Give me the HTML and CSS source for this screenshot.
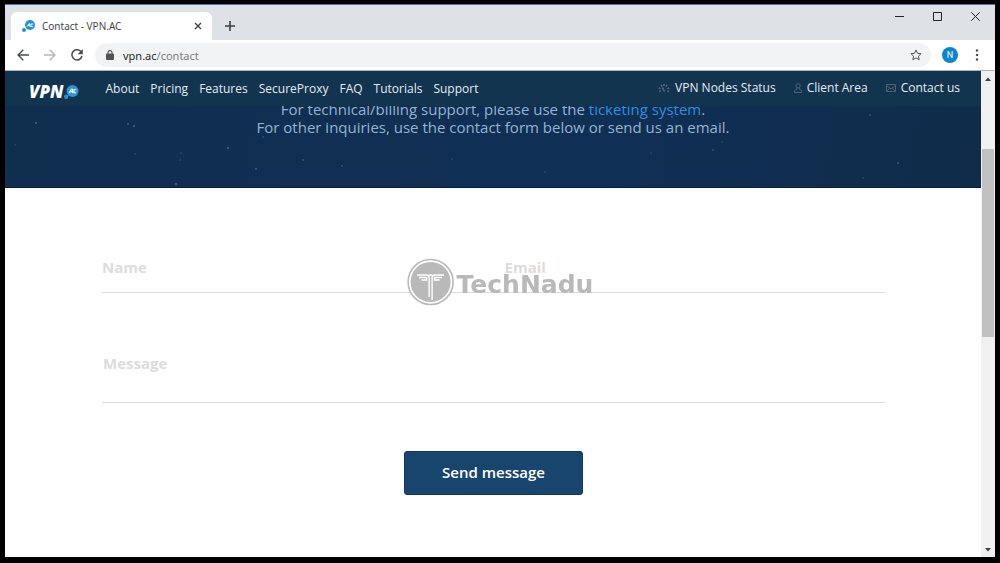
FILE: index.html
```html
<!DOCTYPE html>
<html lang="en">

<head>
    <meta charset="UTF-8">
    <meta name="viewport" content="width=device-width, initial-scale=1.0">
    <title>Contact - VPN.AC</title>
    <link rel="stylesheet" href="styles.css">
</head>

<body>

    <div class="window">
        <!-- Tab strip -->
        <div class="titlebar">
            <div class="tab">
                <svg class="favicon" width="14" height="14" viewBox="0 0 14 14">
                    <circle cx="8" cy="6" r="5" fill="#2492d6" />
                    <circle cx="2" cy="11" r="2" fill="#2492d6" />
                    <path d="M5 7.700l2-3h.8v3M6 6.500h1.800M11.300 5H9.100L8.800 7.500h2.200" fill="none" stroke="#fff" stroke-width="0.9" />
                </svg>
                <span class="tab-title">Contact - VPN.AC</span>
                <button type="button" class="tab-close" aria-label="Close tab">
                    <svg width="8" height="8" viewBox="0 0 8 8"><path d="M1 1l6 6M7 1L1 7" stroke="#3c4043" stroke-width="1.3" /></svg>
                </button>
            </div>
            <button type="button" class="new-tab" aria-label="New tab">
                <svg width="10" height="10" viewBox="0 0 10 10"><path d="M5 0v10M0 5h10" stroke="#3c4043" stroke-width="1.6" /></svg>
            </button>
            <div class="window-controls">
                <button type="button" aria-label="Minimize"><svg width="9" height="9" viewBox="0 0 9 9"><path d="M0 4.5h9" stroke="#222" /></svg></button>
                <button type="button" aria-label="Maximize"><svg width="9" height="9" viewBox="0 0 9 9"><path d="M.5.5h8v8h-8z" fill="none" stroke="#222" /></svg></button>
                <button type="button" aria-label="Close"><svg width="9" height="9" viewBox="0 0 9 9"><path d="M.3.3l8.4 8.4M8.7.3L.3 8.7" stroke="#222" /></svg></button>
            </div>
        </div>

        <!-- Toolbar -->
        <div class="toolbar">
            <button type="button" aria-label="Back">
                <svg width="12" height="12" viewBox="0 0 12 12"><path d="M12 6H1.2M6.3.8L1.1 6l5.2 5.2" fill="none" stroke="#4a4d51" stroke-width="1.4" /></svg>
            </button>
            <button type="button" aria-label="Forward">
                <svg width="12" height="12" viewBox="0 0 12 12"><path d="M0 6h10.8M5.7.8L10.9 6l-5.2 5.2" fill="none" stroke="#b5b7ba" stroke-width="1.4" /></svg>
            </button>
            <button type="button" aria-label="Reload">
                <svg width="12" height="12" viewBox="0 0 12 12"><path d="M10.3 3A5.1 5.1 0 1 0 11 7" fill="none" stroke="#4a4d51" stroke-width="1.5" /><path d="M11.8 0v5.2H6.6z" fill="#4a4d51" /></svg>
            </button>
            <div class="omnibox">
                <svg width="8" height="10" viewBox="0 0 8 10"><path d="M2 4V2.6a2 2 0 0 1 4 0V4" fill="none" stroke="#505357" stroke-width="1.1" /><rect y="3.6" width="8" height="6.4" rx="1" fill="#505357" /></svg>
                <span class="url">vpn.ac<span class="url-path">/contact</span></span>
                <button type="button" class="bookmark" aria-label="Bookmark this page">
                    <svg width="12" height="12" viewBox="0 0 12 12"><path d="M6 1l1.5 3.3 3.6.4-2.7 2.4.8 3.6L6 8.9l-3.2 1.8.8-3.6L.9 4.7l3.6-.4z" fill="none" stroke="#505357" /></svg>
                </button>
            </div>
            <button type="button" class="avatar">N</button>
            <button type="button" class="menu" aria-label="Menu">
                <svg width="4" height="12" viewBox="0 0 4 12" fill="#4a4d51"><circle cx="2" cy="1.5" r="1.2" /><circle cx="2" cy="6" r="1.2" /><circle cx="2" cy="10.5" r="1.2" /></svg>
            </button>
        </div>

        <div class="viewport">
            <div class="page">
                <header class="navbar">
                    <a href="#" class="logo" aria-label="VPN.AC">
                        <span class="logo-text">VPN</span>
                        <svg width="15" height="16" viewBox="0 0 15 16">
                            <circle cx="8.500" cy="7" r="6" fill="#2c95d8" />
                            <circle cx="2.2" cy="12.7" r="2.2" fill="#2492d6" />
                            <path d="M5.1 9l2.4-3.800h1V9M6.300 7.600h2.200M12.200 5.500h-2L9.900 8.600h2.100" fill="none" stroke="#fff" stroke-width="1.1" />
                        </svg>
                    </a>
                    <nav class="main-nav">
                        <a href="#">About</a>
                        <a href="#">Pricing</a>
                        <a href="#">Features</a>
                        <a href="#">SecureProxy</a>
                        <a href="#">FAQ</a>
                        <a href="#">Tutorials</a>
                        <a href="#">Support</a>
                    </nav>
                    <nav class="side-nav">
                        <a href="#">
                            <svg width="12" height="10" viewBox="0 0 12 10" fill="none" stroke="#536b7f">
                                <path d="M1 8.500l1.800-.6M.8 5l1.900.6M3 2l1.200 1.600M6 1v2M9 2L7.800 3.600M11.200 5l-1.900.6M11 8.500l-1.800-.6" stroke-width="1.500" />
                                <path d="M4.500 4.500l2 4" stroke-width="1.500" />
                            </svg>
                            VPN Nodes Status
                        </a>
                        <a href="#">
                            <svg width="8" height="10" viewBox="0 0 8 10" fill="none" stroke="#496175"><circle cx="4" cy="2.8" r="2.2" /><path d="M2.8 5v1.2L.5 7.5v2h7v-2L5.2 6.2V5" /></svg>
                            Client Area
                        </a>
                        <a href="#">
                            <svg width="10" height="8" viewBox="0 0 10 8" fill="none" stroke="#496175"><path d="M.5.5h9v7h-9zM.5 1.5L5 5l4.5-3.5M.8 7.2l2.7-3M9.2 7.2l-2.7-3" /></svg>
                            Contact us
                        </a>
                    </nav>
                </header>

                <section class="hero">
                    <svg class="stars" width="976" height="117" fill="#6fa0d6">
                        <circle cx="31" cy="52" r="1" opacity=".5" /><circle cx="123" cy="53" r="1" opacity=".4" /><circle cx="129" cy="55" r="1" opacity=".5" />
                        <circle cx="171" cy="113" r="1" opacity=".6" /><circle cx="223" cy="77" r="1" opacity=".5" /><circle cx="251" cy="98" r="1" opacity=".4" />
                        <circle cx="298" cy="89" r="1" opacity=".3" /><circle cx="130" cy="83" r="1" opacity=".2" /><circle cx="176" cy="82" r="1" opacity=".2" />
                        <circle cx="258" cy="66" r="1" opacity=".3" /><circle cx="10" cy="74" r="1" opacity=".2" /><circle cx="175" cy="89" r="1" opacity=".2" />
                        <circle cx="337" cy="95" r="1" opacity=".3" /><circle cx="447" cy="88" r="1" opacity=".2" /><circle cx="540" cy="101" r="1" opacity=".2" />
                        <circle cx="667" cy="46" r="1" opacity=".4" /><circle cx="646" cy="82" r="1" opacity=".2" /><circle cx="708" cy="79" r="1" opacity=".3" />
                        <circle cx="717" cy="71" r="1" opacity=".2" /><circle cx="865" cy="44" r="1" opacity=".3" /><circle cx="893" cy="92" r="1" opacity=".4" /><circle cx="858" cy="107" r="1" opacity=".2" />
                    </svg>
                    <p>For technical/billing support, please use the <a href="#">ticketing system</a>.<br>
                        For other inquiries, use the contact form below or send us an email.</p>
                </section>

                <form class="contact-form">
                    <input type="text" placeholder="Name" aria-label="Name">
                    <input type="email" class="email" placeholder="Email" aria-label="Email">
                    <textarea placeholder="Message" aria-label="Message"></textarea>
                    <button type="submit">Send message</button>
                </form>
            </div>

            <div class="scrollbar">
                <svg width="6" height="4" viewBox="0 0 6 4"><path d="M0 4l3-3.5L6 4z" fill="#404040" /></svg>
                <div class="track"><div class="thumb"></div></div>
                <svg width="6" height="4" viewBox="0 0 6 4"><path d="M0 0l3 3.5L6 0z" fill="#404040" /></svg>
            </div>
        </div>
    </div>

    <div class="watermark">
        <svg width="48" height="48" viewBox="0 0 48 48">
            <circle cx="24" cy="24" r="22.5" fill="#fff" stroke="#b9b9b9" stroke-width="1.6" />
            <circle cx="24" cy="24" r="20" fill="#b9b9b9" />
            <g fill="none" stroke="#fff" stroke-width="1.4">
                <path d="M10.500 17H20q2.500 0 2.500 2.500V39" />
                <path d="M37.500 17H28q-2.500 0-2.500 2.500V42" />
                <path d="M12.500 19.500H20V22h-5M35.500 19.500H28V22h5" />
                <path d="M22.500 17h3" />
            </g>
        </svg>
        <span>TechNadu</span>
    </div>

</body>

</html>
```
FILE: styles.css
```css
* {
    box-sizing: border-box;
}

body {
    margin: 0;
    background-color: #000;
    font-family: "Open Sans", sans-serif;
}

button {
    padding: 0;
    border: none;
    background: none;
    cursor: pointer;
}

a {
    text-decoration: none;
}

svg {
    display: block;
    flex: none;
}

.window {
    display: flex;
    flex-direction: column;
    min-height: 100vh;
    border: solid #000;
    border-width: 4px 5px 6px;
    background-color: #fff;
}

/* Browser chrome */
.titlebar {
    display: flex;
    height: 36px;
    padding-left: 6px;
    border-top: 1px solid #4a78b0;
    background-color: #dee1e6;
}

.tab {
    display: flex;
    align-items: center;
    width: 201px;
    height: 28px;
    margin-top: 7px;
    padding: 0 10px 0 11px;
    border-radius: 6px 6px 0 0;
    background-color: #fff;
}

.tab-title {
    flex: 1;
    margin-left: 6px;
    font-family: "Noto Sans", sans-serif;
    font-size: 10px;
    color: #45494d;
}

.new-tab {
    margin: 7px 0 0 13px;
}

.window-controls {
    display: flex;
    align-items: flex-start;
    gap: 29px;
    margin-left: auto;
    padding: 7px 15px;
}

.toolbar {
    display: flex;
    align-items: center;
    gap: 15px;
    height: 31px;
    padding: 0 16px 0 12px;
    border-bottom: 1px solid #a9b5bd;
}

.omnibox {
    display: flex;
    flex: 1;
    align-items: center;
    height: 24px;
    margin-left: -3px;
    padding: 0 9px 0 11px;
    border-radius: 12px;
    background-color: #f1f3f4;
    font-family: "Noto Sans", sans-serif;
    font-size: 11px;
    color: #27292c;
}

.url {
    flex: 1;
    margin-left: 9px;
}

.url-path {
    color: #7b7f84;
}

.avatar {
    width: 16px;
    height: 16px;
    margin: 0 2px 0 -4px;
    border-radius: 50%;
    background-color: #0b84cf;
    font: 9px Roboto, sans-serif;
    color: #fff;
}

.viewport {
    display: flex;
    flex: 1;
}

.page {
    position: relative;
    flex: 1;
}

/* Site header */
.navbar {
    position: absolute;
    z-index: 1;
    top: 0;
    left: 0;
    right: 0;
    display: flex;
    align-items: center;
    height: 35px;
    padding: 0 21px 0 24px;
    background-color: #12344f;
}

.logo {
    display: flex;
    align-items: center;
    padding-top: 6px;
}

.logo-text {
    font-size: 17px;
    font-weight: 800;
    font-style: italic;
    line-height: 16px;
    color: #fff;
}

.main-nav,
.side-nav {
    display: flex;
    gap: 11px;
    font-size: 12px;
}

.main-nav {
    margin-left: 27px;
}

.side-nav {
    gap: 18px;
    margin-left: auto;
    padding-bottom: 2px;
}

.side-nav a {
    display: flex;
    align-items: center;
    gap: 5px;
}

.navbar nav a {
    color: #e3edf5;
}

.hero {
    position: relative;
    height: 117px;
    padding-top: 29px;
    border-bottom: 1px solid #0a1c44;
    background: linear-gradient(100deg, #102e4e, #102f55 60%, #102c4a);
    text-align: center;
    overflow: hidden;
}

.stars {
    position: absolute;
    top: 0;
    left: 0;
}

.hero p {
    position: relative;
    margin: 0;
    font-size: 15px;
    line-height: 18px;
    color: #93b3d1;
}

.hero a {
    color: #2d8fdc;
}

/* Contact form */
.contact-form {
    display: grid;
    grid-template-columns: 1fr 1fr;
    padding: 56px 96px 60px 97px;
}

.contact-form input,
.contact-form textarea {
    width: 100%;
    height: 49px;
    padding: 0 0 2px;
    border: none;
    border-bottom: 1px solid #dcdcdc;
    border-radius: 0;
    background: none;
    font: bold 15px "Open Sans", sans-serif;
    color: #555;
    outline: none;
    resize: none;
}

.contact-form .email {
    padding-left: 11px;
}

.contact-form textarea {
    grid-column: span 2;
    height: 50px;
    margin-top: 60px;
    padding-left: 1px;
    overflow: hidden;
}

.contact-form ::placeholder {
    color: #dcdcdc;
    opacity: 1;
}

.contact-form button {
    grid-column: span 2;
    justify-self: center;
    height: 44px;
    margin-top: 48px;
    padding: 0 37px 2px;
    border: 1px solid #0f3963;
    border-radius: 3px;
    background-color: #17456e;
    font: 600 15px "Open Sans", sans-serif;
    color: #fff;
}

.scrollbar {
    display: flex;
    flex-direction: column;
    align-items: center;
    width: 14px;
    padding: 6px 0 5px;
    background-color: #f0f0f0;
}

.track {
    flex: 1;
    width: 12px;
    padding-top: 68px;
}

.thumb {
    height: 188px;
    background-color: #c1c1c1;
}

.watermark {
    position: fixed;
    top: 50%;
    left: 50%;
    display: flex;
    align-items: center;
    gap: 2px;
    transform: translate(-50%, -50%);
    font: bold 25px "DejaVu Sans", sans-serif;
    color: #b9b9b9;
}

.watermark span {
    padding-top: 5px;
}
```
